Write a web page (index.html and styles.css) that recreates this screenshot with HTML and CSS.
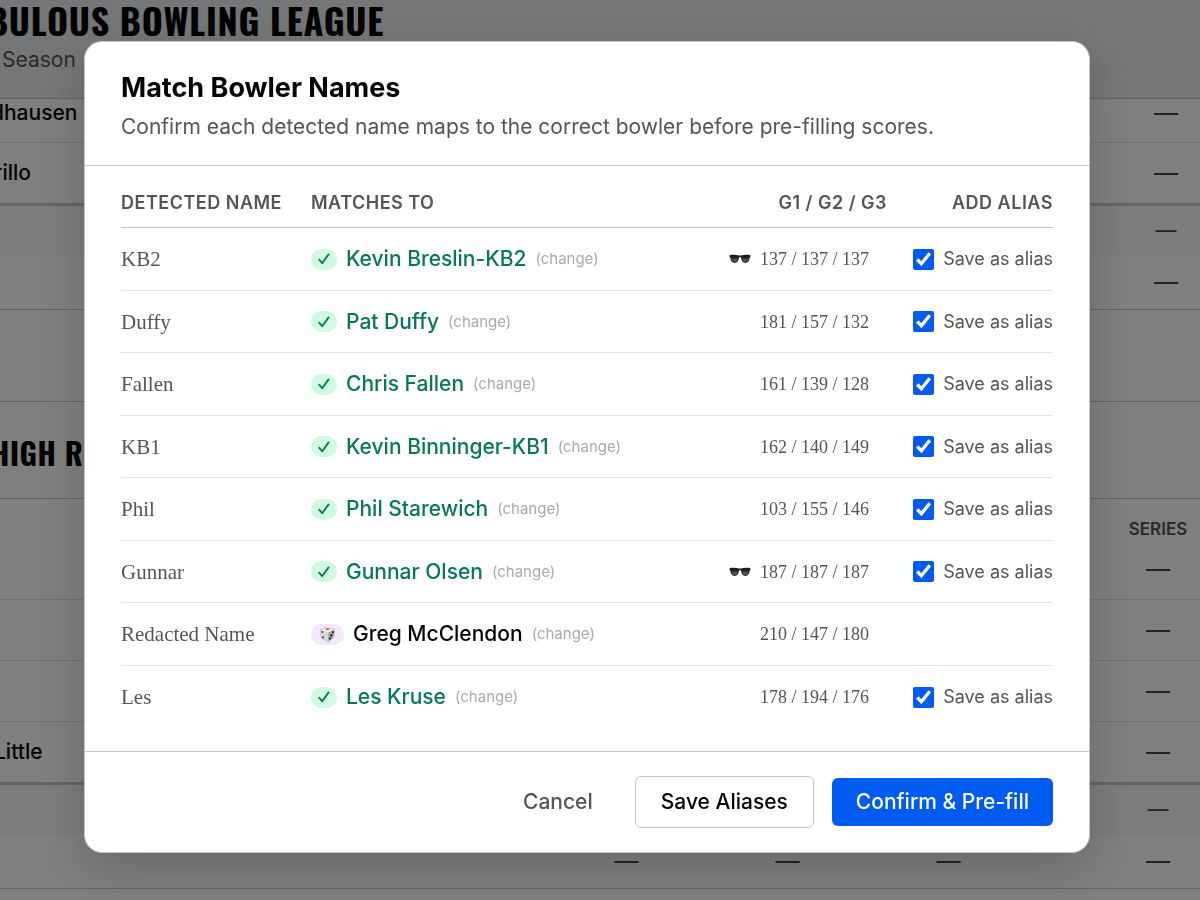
FILE: index.html
```html
<!DOCTYPE html>
<html lang="en">
<head>
<meta charset="utf-8">
<meta name="viewport" content="width=device-width, initial-scale=1">
<title>Match Bowler Names</title>
<link rel="stylesheet" href="styles.css">
</head>
<body>
<svg class="defs" aria-hidden="true">
  <symbol id="check" viewBox="0 0 12 12"><path d="M1.3 6.8 4.2 10.2 10.6 1.4" fill="none" stroke="currentColor" stroke-width="1.8" stroke-linecap="round" stroke-linejoin="round"/></symbol>
  <symbol id="shades" viewBox="0 0 22 10">
    <path d="M.5 1.2C4 .4 7.5.6 10 1.5h2C14.500.6 18 .4 21.500 1.200L21.300 3.200 20.600 3.800C20.300 7 19 8.900 16.400 8.900 13.600 8.900 12.500 7 12.100 3.800 11.600 3.200 10.400 3.200 9.900 3.800 9.500 7 8.400 8.900 5.600 8.900 3 8.900 1.700 7 1.400 3.800L.7 3.200Z" fill="#1d1d1d"/>
    <path d="M2.400 4.600C3 7.600 4.200 8.200 5.700 8.200 7.500 8.200 8.500 7 8.900 4.600ZM13.100 4.600C13.500 7 14.500 8.200 16.300 8.200 17.900 8.200 19.200 7.300 19.600 4.600Z" fill="#4d5350"/>
  </symbol>
</svg>

<div class="page">
  <header class="masthead">
    <h1 class="league"><span>BULOUS BOWLING LEAGUE</span></h1>
    <p class="season">Season</p>
  </header>
  <table class="scores">
    <colgroup><col><col class="col-end"></colgroup>
    <tr class="r-first"><td><span class="cut cut-wide">dhausen</span></td><td>—</td></tr>
    <tr class="r-thick"><td><span class="cut">rillo</span></td><td>—</td></tr>
    <tr class="r-band"><td></td><td>—</td></tr>
    <tr class="r-last"><td></td><td>—</td></tr>
  </table>
  <div class="spacer"></div>
  <h2 class="team"><span class="cut cut-wide">HIGH R</span></h2>
  <table class="scores">
    <colgroup><col><col class="col-game"><col class="col-game"><col class="col-game"><col class="col-gap"><col class="col-series"></colgroup>
    <tr class="r-head"><td></td><td></td><td></td><td></td><td></td><th>SERIES</th></tr>
    <tr class="r-one"><td></td><td></td><td></td><td></td><td></td><td>—</td></tr>
    <tr class="r-row"><td></td><td></td><td></td><td></td><td></td><td>—</td></tr>
    <tr class="r-row"><td></td><td></td><td></td><td></td><td></td><td>—</td></tr>
    <tr class="r-thick"><td><span class="cut">Little</span></td><td></td><td></td><td></td><td></td><td>—</td></tr>
    <tr class="r-band"><td></td><td></td><td></td><td></td><td></td><td>—</td></tr>
    <tr class="r-last"><td></td><td>—</td><td>—</td><td>—</td><td></td><td>—</td></tr>
  </table>
</div>

<div class="overlay">
  <section class="modal" role="dialog" aria-modal="true" aria-labelledby="title">
    <header class="modal-head">
      <h2 id="title" class="title">Match Bowler Names</h2>
      <p class="subtitle">Confirm each detected name maps to the correct bowler before pre-filling scores.</p>
    </header>
    <div class="modal-body">
      <table class="matches">
        <colgroup><col class="col-name"><col><col class="col-scores"><col class="col-alias"></colgroup>
        <thead><tr><th>DETECTED NAME</th><th>MATCHES TO</th><th class="end">G1 / G2 / G3</th><th class="end">ADD ALIAS</th></tr></thead>
        <tbody>
          <tr><td class="name">KB2</td><td><div class="match"><span class="badge"><svg class="tick"><use href="#check"/></svg></span><span class="who">Kevin Breslin-KB2</span><button class="change" type="button">(change)</button></div></td><td><div class="games"><svg class="shades" role="img" aria-label="Sunglasses"><use href="#shades"/></svg>137 / 137 / 137</div></td><td><label class="alias"><input type="checkbox" checked>Save as alias</label></td></tr>
          <tr><td class="name">Duffy</td><td><div class="match"><span class="badge"><svg class="tick"><use href="#check"/></svg></span><span class="who">Pat Duffy</span><button class="change" type="button">(change)</button></div></td><td><div class="games">181 / 157 / 132</div></td><td><label class="alias"><input type="checkbox" checked>Save as alias</label></td></tr>
          <tr><td class="name">Fallen</td><td><div class="match"><span class="badge"><svg class="tick"><use href="#check"/></svg></span><span class="who">Chris Fallen</span><button class="change" type="button">(change)</button></div></td><td><div class="games">161 / 139 / 128</div></td><td><label class="alias"><input type="checkbox" checked>Save as alias</label></td></tr>
          <tr><td class="name">KB1</td><td><div class="match"><span class="badge"><svg class="tick"><use href="#check"/></svg></span><span class="who">Kevin Binninger-KB1</span><button class="change" type="button">(change)</button></div></td><td><div class="games">162 / 140 / 149</div></td><td><label class="alias"><input type="checkbox" checked>Save as alias</label></td></tr>
          <tr><td class="name">Phil</td><td><div class="match"><span class="badge"><svg class="tick"><use href="#check"/></svg></span><span class="who">Phil Starewich</span><button class="change" type="button">(change)</button></div></td><td><div class="games">103 / 155 / 146</div></td><td><label class="alias"><input type="checkbox" checked>Save as alias</label></td></tr>
          <tr><td class="name">Gunnar</td><td><div class="match"><span class="badge"><svg class="tick"><use href="#check"/></svg></span><span class="who">Gunnar Olsen</span><button class="change" type="button">(change)</button></div></td><td><div class="games"><svg class="shades" role="img" aria-label="Sunglasses"><use href="#shades"/></svg>187 / 187 / 187</div></td><td><label class="alias"><input type="checkbox" checked>Save as alias</label></td></tr>
          <tr><td class="name">Redacted Name</td><td><div class="match"><span class="badge badge-dice"><svg class="dice" viewBox="0 0 16 16" role="img" aria-label="Die"><path d="M8 .8 14.600 3 8.700 6 1.300 3.300Z" fill="#f0f0f0"/><path d="M1.300 3.300 8.700 6 8.900 15.200 2.200 11.600Z" fill="#d6d6d4"/><path d="M14.600 3 14 10.600 8.900 15.200 8.700 6Z" fill="#a6a6a6"/><path d="M1.300 3.300 8 .8 14.600 3 14 10.600 8.900 15.200 2.200 11.600Z" fill="none" stroke="#c8c8c8" stroke-width=".8" stroke-linejoin="round"/><ellipse cx="8" cy="2.900" rx="2" ry=".9" fill="#e33a35"/><g fill="#222"><ellipse cx="3.100" cy="5.600" rx=".7" ry="1"/><ellipse cx="3.800" cy="10.700" rx=".8" ry="1"/><ellipse cx="13.100" cy="5.900" rx=".8" ry="1.200"/><ellipse cx="11.600" cy="8.800" rx=".9" ry="1.200"/><ellipse cx="10.200" cy="11.700" rx=".9" ry="1.200"/></g></svg></span><span class="who plain">Greg McClendon</span><button class="change" type="button">(change)</button></div></td><td><div class="games">210 / 147 / 180</div></td><td></td></tr>
          <tr><td class="name">Les</td><td><div class="match"><span class="badge"><svg class="tick"><use href="#check"/></svg></span><span class="who">Les Kruse</span><button class="change" type="button">(change)</button></div></td><td><div class="games">178 / 194 / 176</div></td><td><label class="alias"><input type="checkbox" checked>Save as alias</label></td></tr>
        </tbody>
      </table>
    </div>
    <footer class="modal-foot">
      <button class="btn btn-quiet" type="button">Cancel</button>
      <button class="btn btn-outline" type="button">Save Aliases</button>
      <button class="btn btn-primary" type="button">Confirm &amp; Pre-fill</button>
    </footer>
  </section>
</div>
</body>
</html>
```
FILE: styles.css
```css
* { box-sizing: border-box; }
body {
  margin: 0;
  height: 100vh;
  overflow: hidden;
  font-family: Inter, "Liberation Sans", sans-serif;
  font-size: 21px;
  line-height: 30px;
  color: #050508;
  background: #fff;
}
h1, h2, p { margin: 0; }
button { font-family: inherit; cursor: pointer; }
.defs { position: absolute; width: 0; height: 0; }

/* League page behind the dialog */
.masthead {
  height: 99px;
  background: #ebecf0;
  border-bottom: 1px solid #c4c6cb;
  overflow: hidden;
}
.league, .team {
  font-family: Oswald, "Roboto Condensed", "Open Sans Condensed", "Liberation Sans Narrow", "Liberation Sans", sans-serif;
  font-weight: 700;
  letter-spacing: 0.02em;
  white-space: nowrap;
}
.league {
  display: flex;
  justify-content: flex-end;
  width: 384px;
  font-size: 36px;
  line-height: 40px;
}
.season { padding: 5px 0 0 2px; color: #555; }
.scores {
  width: 100%;
  table-layout: fixed;
  border-collapse: separate;
  border-spacing: 0;
}
.scores td, .scores th {
  padding: 0;
  text-align: center;
  font-weight: 500;
  color: #444;
  border-bottom: 1px solid #e2e2e4;
}
.scores td { font-size: 24px; font-weight: 400; }
.scores td:first-child { text-align: left; color: #050508; font-size: 21px; font-weight: 500; }
.scores th { font-size: 17px; line-height: 20px; font-weight: 600; color: #555; }
.cut { display: inline-block; margin-left: -6px; }
.cut-wide { margin-left: -9px; }
.col-end { width: 68px; }
.col-game { width: 161px; }
.col-gap { width: 87px; }
.col-series { width: 84px; }
.scores .r-first td { height: 44px; padding-bottom: 15px; line-height: 28px; }
.r-row td { height: 61px; }
.r-thick td { height: 63px; border-bottom: 3px solid #c8c8cc; }
.scores .r-band td { height: 49px; background: #f8f8f8; border-bottom: 0; font-size: 21px; }
.r-last td { height: 55px; border-bottom-color: #c8c8cc; }
.scores .r-head th, .scores .r-head td { height: 40px; padding-top: 20px; border-bottom: 0; }
.r-one td { height: 61px; }
.spacer { height: 92px; border-bottom: 1px solid #c8c8cc; }
.team { height: 97px; padding-top: 26px; font-size: 30px; line-height: 50px; border-bottom: 1px solid #c8c8cc; }

/* Dialog */
.overlay {
  position: fixed;
  inset: 0;
  display: flex;
  align-items: flex-start;
  padding: 41px 110px 0 84px;
  background: rgba(0, 0, 0, .5);
}
.modal {
  flex: 1;
  background: #fff;
  border: 1px solid #c4c4c9;
  border-radius: 18px;
  box-shadow: 0 16px 48px rgba(0, 0, 0, .18);
}
.modal-head { padding: 31px 36px 23px; border-bottom: 1px solid #c4c4c9; }
.title { font-size: 27px; line-height: 30px; font-weight: 700; }
.subtitle { padding-top: 9px; color: #555; }
.modal-body { padding: 12px 36px 23px; }
.matches {
  width: 100%;
  table-layout: fixed;
  border-collapse: separate;
  border-spacing: 0;
}
.matches th {
  height: 50px;
  padding: 0;
  text-align: left;
  font-size: 18px;
  font-weight: 600;
  letter-spacing: 0.5px;
  color: #555;
  border-bottom: 1px solid #c4c4c9;
}
.matches th.end { text-align: right; }
.matches td { height: 63px; padding: 0; border-bottom: 1px solid #e4e4e6; }
.matches tr:nth-child(even) td { height: 62px; }
.matches tr:last-child td { border-bottom: 0; }
.col-name { width: 190px; }
.col-scores { width: 200px; }
.col-alias { width: 166px; }
.name, .games { font-family: "Liberation Serif", serif; color: #555; }
.match { display: flex; align-items: center; }
.badge {
  display: grid;
  place-items: center;
  width: 26px;
  height: 21px;
  border-radius: 11px;
  background: #d0f9e2;
  color: #047857;
}
.badge-dice { width: 33px; background: #f3e8ff; }
.tick { width: 12px; height: 12px; }
.dice { width: 17px; height: 17px; }
.who { margin-left: 9px; font-size: 21px; font-weight: 500; color: #047857; }
.plain { color: #050508; }
.change {
  margin-left: 9px;
  padding: 0;
  border: 0;
  background: none;
  font-size: 15px;
  line-height: 20px;
  color: #aaa;
}
.games {
  display: flex;
  align-items: center;
  justify-content: flex-end;
  gap: 9px;
  padding-right: 18px;
  font-size: 18px;
}
.shades { width: 22px; height: 10px; }
.alias {
  display: flex;
  align-items: center;
  justify-content: flex-end;
  gap: 9px;
  font-size: 18px;
  white-space: nowrap;
  color: #555;
}
.alias input { width: 21px; height: 21px; margin: 0; accent-color: #005bf0; }
.modal-foot {
  display: flex;
  align-items: center;
  justify-content: flex-end;
  gap: 18px;
  padding: 24px 36px;
  border-top: 1px solid #c4c4c9;
}
.btn {
  padding: 9px 24px;
  border: 0;
  border-radius: 6px;
  background: none;
  font-size: 21px;
  line-height: 30px;
  font-weight: 500;
}
.btn-quiet { color: #555; }
.btn-outline { color: #050508; padding: 10px 25px; border: 1px solid #c4c4c9; }
.btn-primary { color: #fff; background: #005bf0; }
```
